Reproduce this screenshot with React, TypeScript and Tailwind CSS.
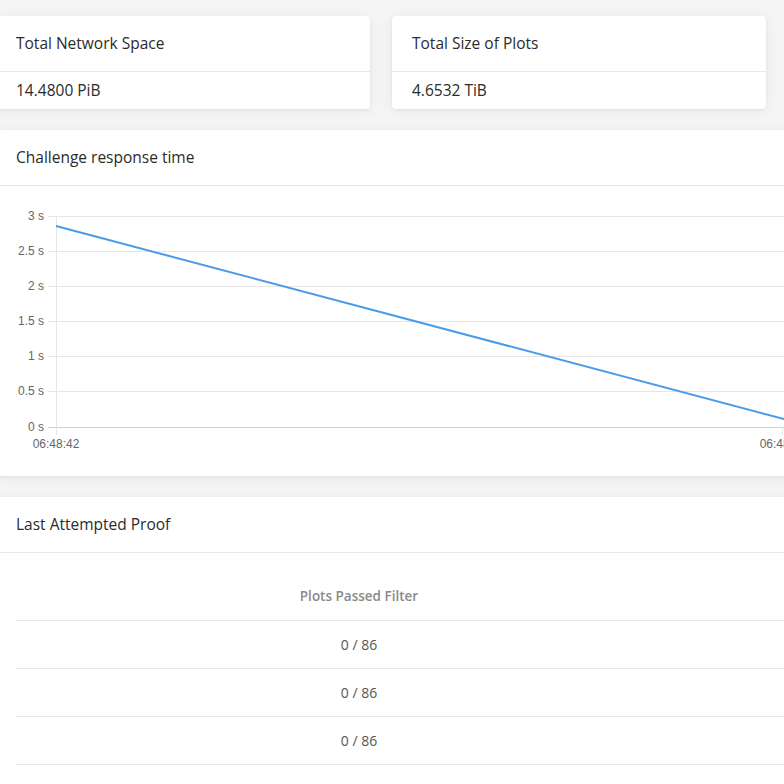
import React from "react";

const font = { fontFamily: '"Open Sans", "Noto Sans", sans-serif' };

function Card({ className = "", children }: { className?: string; children: React.ReactNode }) {
  return (
    <div className={`bg-white rounded-[4px] shadow-[0_1px_3px_rgba(0,0,0,0.06),0_2px_14px_rgba(0,0,0,0.06)] ${className}`}>
      {children}
    </div>
  );
}

function Header({ title }: { title: string }) {
  return (
    <div className="h-[56px] flex items-center px-5 border-b border-[#e8e8e8] text-[15.5px] text-[#2b2b2b]">
      {title}
    </div>
  );
}

function Chart() {
  const ox = 4; // card starts 4px left of page
  const ys = [
    { l: "3 s", y: 216 },
    { l: "2.5 s", y: 251 },
    { l: "2 s", y: 286 },
    { l: "1.5 s", y: 321 },
    { l: "1 s", y: 356 },
    { l: "0.5 s", y: 391 },
    { l: "0 s", y: 427 },
  ];
  const top = 186;
  const lf = { fontFamily: '"Liberation Sans", Arial, sans-serif' };
  return (
    <svg width="900" height="290" className="block">
      {ys.map((t) => (
        <g key={t.l}>
          <line
            x1={48 + ox}
            x2={900}
            y1={t.y - top + 0.5}
            y2={t.y - top + 0.5}
            stroke={t.l === "0 s" ? "#d0d0d0" : "#e6e6e6"}
            strokeWidth={1}
          />
          <text x={44 + ox} y={t.y - top + 4} textAnchor="end" fontSize="12" fill="#666" style={lf}>
            {t.l}
          </text>
        </g>
      ))}
      <line x1={56.5 + ox} x2={56.5 + ox} y1={216 - top} y2={435 - top} stroke="#e6e6e6" strokeWidth={1} />
      <line x1={784 + ox - 1.5} x2={784 + ox - 1.5} y1={427 - top} y2={435 - top} stroke="#e6e6e6" strokeWidth={1} />
      <polyline
        points={`${56 + ox},${226 - top} ${784 + ox},${419 - top} ${900},${449 - top}`}
        fill="none"
        stroke="#4a9be8"
        strokeWidth={2}
      />
      <text x={56 + ox} y={448 - top} textAnchor="middle" fontSize="12" fill="#666" style={lf}>
        06:48:42
      </text>
      <text x={783 + ox} y={448 - top} textAnchor="middle" fontSize="12" fill="#666" style={lf}>
        06:48:52
      </text>
    </svg>
  );
}

export default function App() {
  const rows = [0, 1, 2, 3, 4];
  return (
    <div className="w-[784px] h-[784px] overflow-hidden bg-[#f5f5f5]" style={font}>
      <div className="ml-[-4px] w-[1000px] pt-4 flex flex-col gap-[21px]">
        <div className="flex gap-[22px]">
          <Card className="w-[374px] overflow-hidden">
            <Header title="Total Network Space" />
            <div className="h-[37px] flex items-center px-5 text-[15.5px] text-[#2b2b2b]">14.4800 PiB</div>
          </Card>
          <Card className="w-[374px] overflow-hidden">
            <Header title="Total Size of Plots" />
            <div className="h-[37px] flex items-center px-5 text-[15.5px] text-[#2b2b2b]">4.6532 TiB</div>
          </Card>
        </div>
        <Card className="w-[1000px]">
          <Header title="Challenge response time" />
          <Chart />
        </Card>
        <Card className="w-[1000px]">
          <Header title="Last Attempted Proof" />
          <div className="pl-5 pt-[20px]">
            <div className="h-[48px] flex items-center border-b border-[#e6e6e6]">
              <div className="w-[686px] text-center text-[13.5px] font-semibold text-[#8a8a8a]">Plots Passed Filter</div>
            </div>
            {rows.map((r) => (
              <div key={r} className="h-[48px] flex items-center border-b border-[#e6e6e6]">
                <div className="w-[686px] text-center text-[14px] text-[#555]">0 / 86</div>
              </div>
            ))}
          </div>
        </Card>
      </div>
    </div>
  );
}
